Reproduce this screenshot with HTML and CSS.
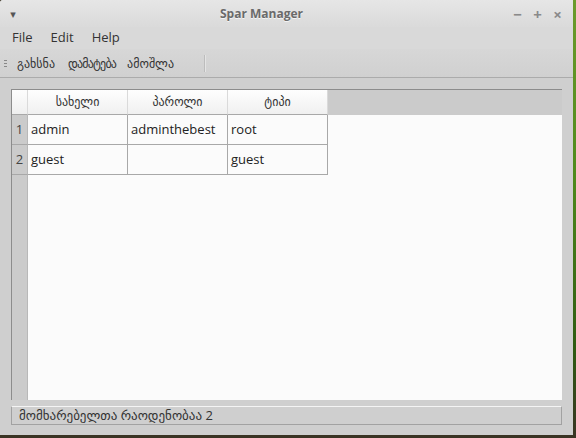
FILE: index.html
```html
<!DOCTYPE html>
<html lang="ka">
<head>
  <meta charset="UTF-8">
  <title>Spar Manager</title>
  <link rel="stylesheet" href="styles.css">
</head>
<body>
  <div class="desktop">
    <div class="window">
      <div class="titlebar">
        <div class="win-menu">&#9662;</div>
        <div class="win-title">Spar Manager</div>
        <div class="win-controls">
          <span>&minus;</span>
          <span>+</span>
          <span>&times;</span>
        </div>
      </div>

      <div class="menubar">
        <span>File</span>
        <span>Edit</span>
        <span>Help</span>
      </div>

      <div class="toolbar">
        <div class="handle"></div>
        <span class="tool">გახსნა</span>
        <span class="tool narrow">დამატება</span>
        <span class="tool">ამოშლა</span>
        <div class="tool-sep"></div>
      </div>

      <div class="content">
        <div class="table-frame">
          <div class="grid">
            <div class="corner"></div>
            <div class="col-head">სახელი</div>
            <div class="col-head">პაროლი</div>
            <div class="col-head">ტიპი</div>
            <div class="head-fill"></div>

            <div class="row-head">1</div>
            <div class="cell">admin</div>
            <div class="cell">adminthebest</div>
            <div class="cell">root</div>
            <div class="empty"></div>

            <div class="row-head">2</div>
            <div class="cell">guest</div>
            <div class="cell"></div>
            <div class="cell">guest</div>
            <div class="empty"></div>

            <div class="row-head rest"></div>
            <div class="empty rest-fill"></div>
          </div>
        </div>

        <div class="statusbar">მომხარებელთა რაოდენობაა 2</div>
      </div>
    </div>
    <div class="desk-edge"></div>
  </div>
</body>
</html>
```

FILE: styles.css
```css
body {
  margin: 0;
  background-color: #3a3424;
  font-family: "Open Sans", "DejaVu Sans", sans-serif;
  color: #333;
}

.desktop {
  display: flex;
  width: 576px;
  height: 438px;
}

.window {
  width: 573px;
  height: 435px;
  display: flex;
  flex-direction: column;
  background-color: #cfcfcf;
  border-top-left-radius: 3px;
  overflow: hidden;
}

.desk-edge {
  width: 3px;
  height: 438px;
  background: linear-gradient(#6c9a2c, #4f8a1c 40%, #2f5a12 80%, #3a3424);
}

/* title bar */
.titlebar {
  height: 27px;
  display: flex;
  align-items: center;
  background: linear-gradient(#e6e6e6, #dadada);
}

.win-menu {
  width: 26px;
  text-align: center;
  font-size: 11px;
  color: #555;
}

.win-title {
  flex: 1;
  text-align: center;
  font-size: 12px;
  font-weight: bold;
  color: #6a6a6a;
  text-shadow: 0 1px 0 #f4f4f4;
}

.win-controls {
  width: 76px;
  display: flex;
  gap: 9px;
  padding-left: 15px;
  box-sizing: border-box;
  font-size: 15px;
  font-weight: bold;
  color: #8a8a8a;
}

.win-controls span {
  width: 11px;
  text-align: center;
}

/* menu */
.menubar {
  height: 22px;
  display: flex;
  align-items: center;
  gap: 18px;
  padding-left: 12px;
  padding-bottom: 3px;
  box-sizing: border-box;
  font-size: 13px;
  background-color: #d9d9d9;
}

/* toolbar */
.toolbar {
  height: 28px;
  display: flex;
  align-items: center;
  padding-left: 4px;
  background: linear-gradient(#d7d7d7, #d0d0d0);
  border-bottom: 1px solid #ababab;
  font-size: 12px;
}

.handle {
  width: 3px;
  height: 7px;
  margin-right: 10px;
  background: repeating-linear-gradient(#888 0 1px, transparent 1px 3px);
}

.tool {
  margin-right: 13px;
  color: #333;
}

.tool.narrow {
  letter-spacing: -0.8px;
  margin-right: 11px;
}

.tool-sep {
  width: 1px;
  height: 17px;
  margin-left: 17px;
  background-color: #bcbcbc;
  border-right: 1px solid #e4e4e4;
}

/* content */
.content {
  flex: 1;
  display: flex;
  flex-direction: column;
  padding: 11px 11px 10px 11px;
}

.table-frame {
  flex: 1;
  border-top: 1px solid #8c8c8c;
  border-left: 1px solid #8c8c8c;
  display: flex;
}

.grid {
  flex: 1;
  display: grid;
  grid-template-columns: 16px 100px 100px 100px 1fr;
  grid-template-rows: 25px 30px 30px 1fr;
}

.corner,
.row-head {
  background-color: #cbcbcb;
  border-right: 1px solid #b8b8b8;
}

.corner {
  background: linear-gradient(#fdfdfd, #efefef);
  border-bottom: 1px solid #a8a8a8;
  border-right: 1px solid #dadada;
}

.col-head {
  background: linear-gradient(#fefefe, #f0f0f0);
  border-right: 1px solid #dadada;
  border-bottom: 1px solid #a8a8a8;
  text-align: center;
  font-size: 12px;
  line-height: 24px;
}

.head-fill {
  background-color: #cbcbcb;
  border-bottom: 1px solid #cbcbcb;
}

.row-head {
  font-size: 13px;
  line-height: 29px;
  text-align: center;
  color: #444;
  border-bottom: 1px solid #a8a8a8;
}

.row-head.rest {
  border-bottom: none;
}

.cell {
  background-color: #fbfbfb;
  border-right: 1px solid #a8a8a8;
  border-bottom: 1px solid #a8a8a8;
  font-size: 13px;
  line-height: 29px;
  padding-left: 3px;
  color: #222;
}

.empty {
  background-color: #fbfbfb;
}

.rest-fill {
  grid-column: 2 / 6;
}

.statusbar {
  margin-top: 6px;
  height: 17px;
  border: 1px solid #a2a2a2;
  border-top-color: #f4f4f4;
  padding-left: 7px;
  font-size: 13px;
  line-height: 17px;
  color: #333;
}
```
